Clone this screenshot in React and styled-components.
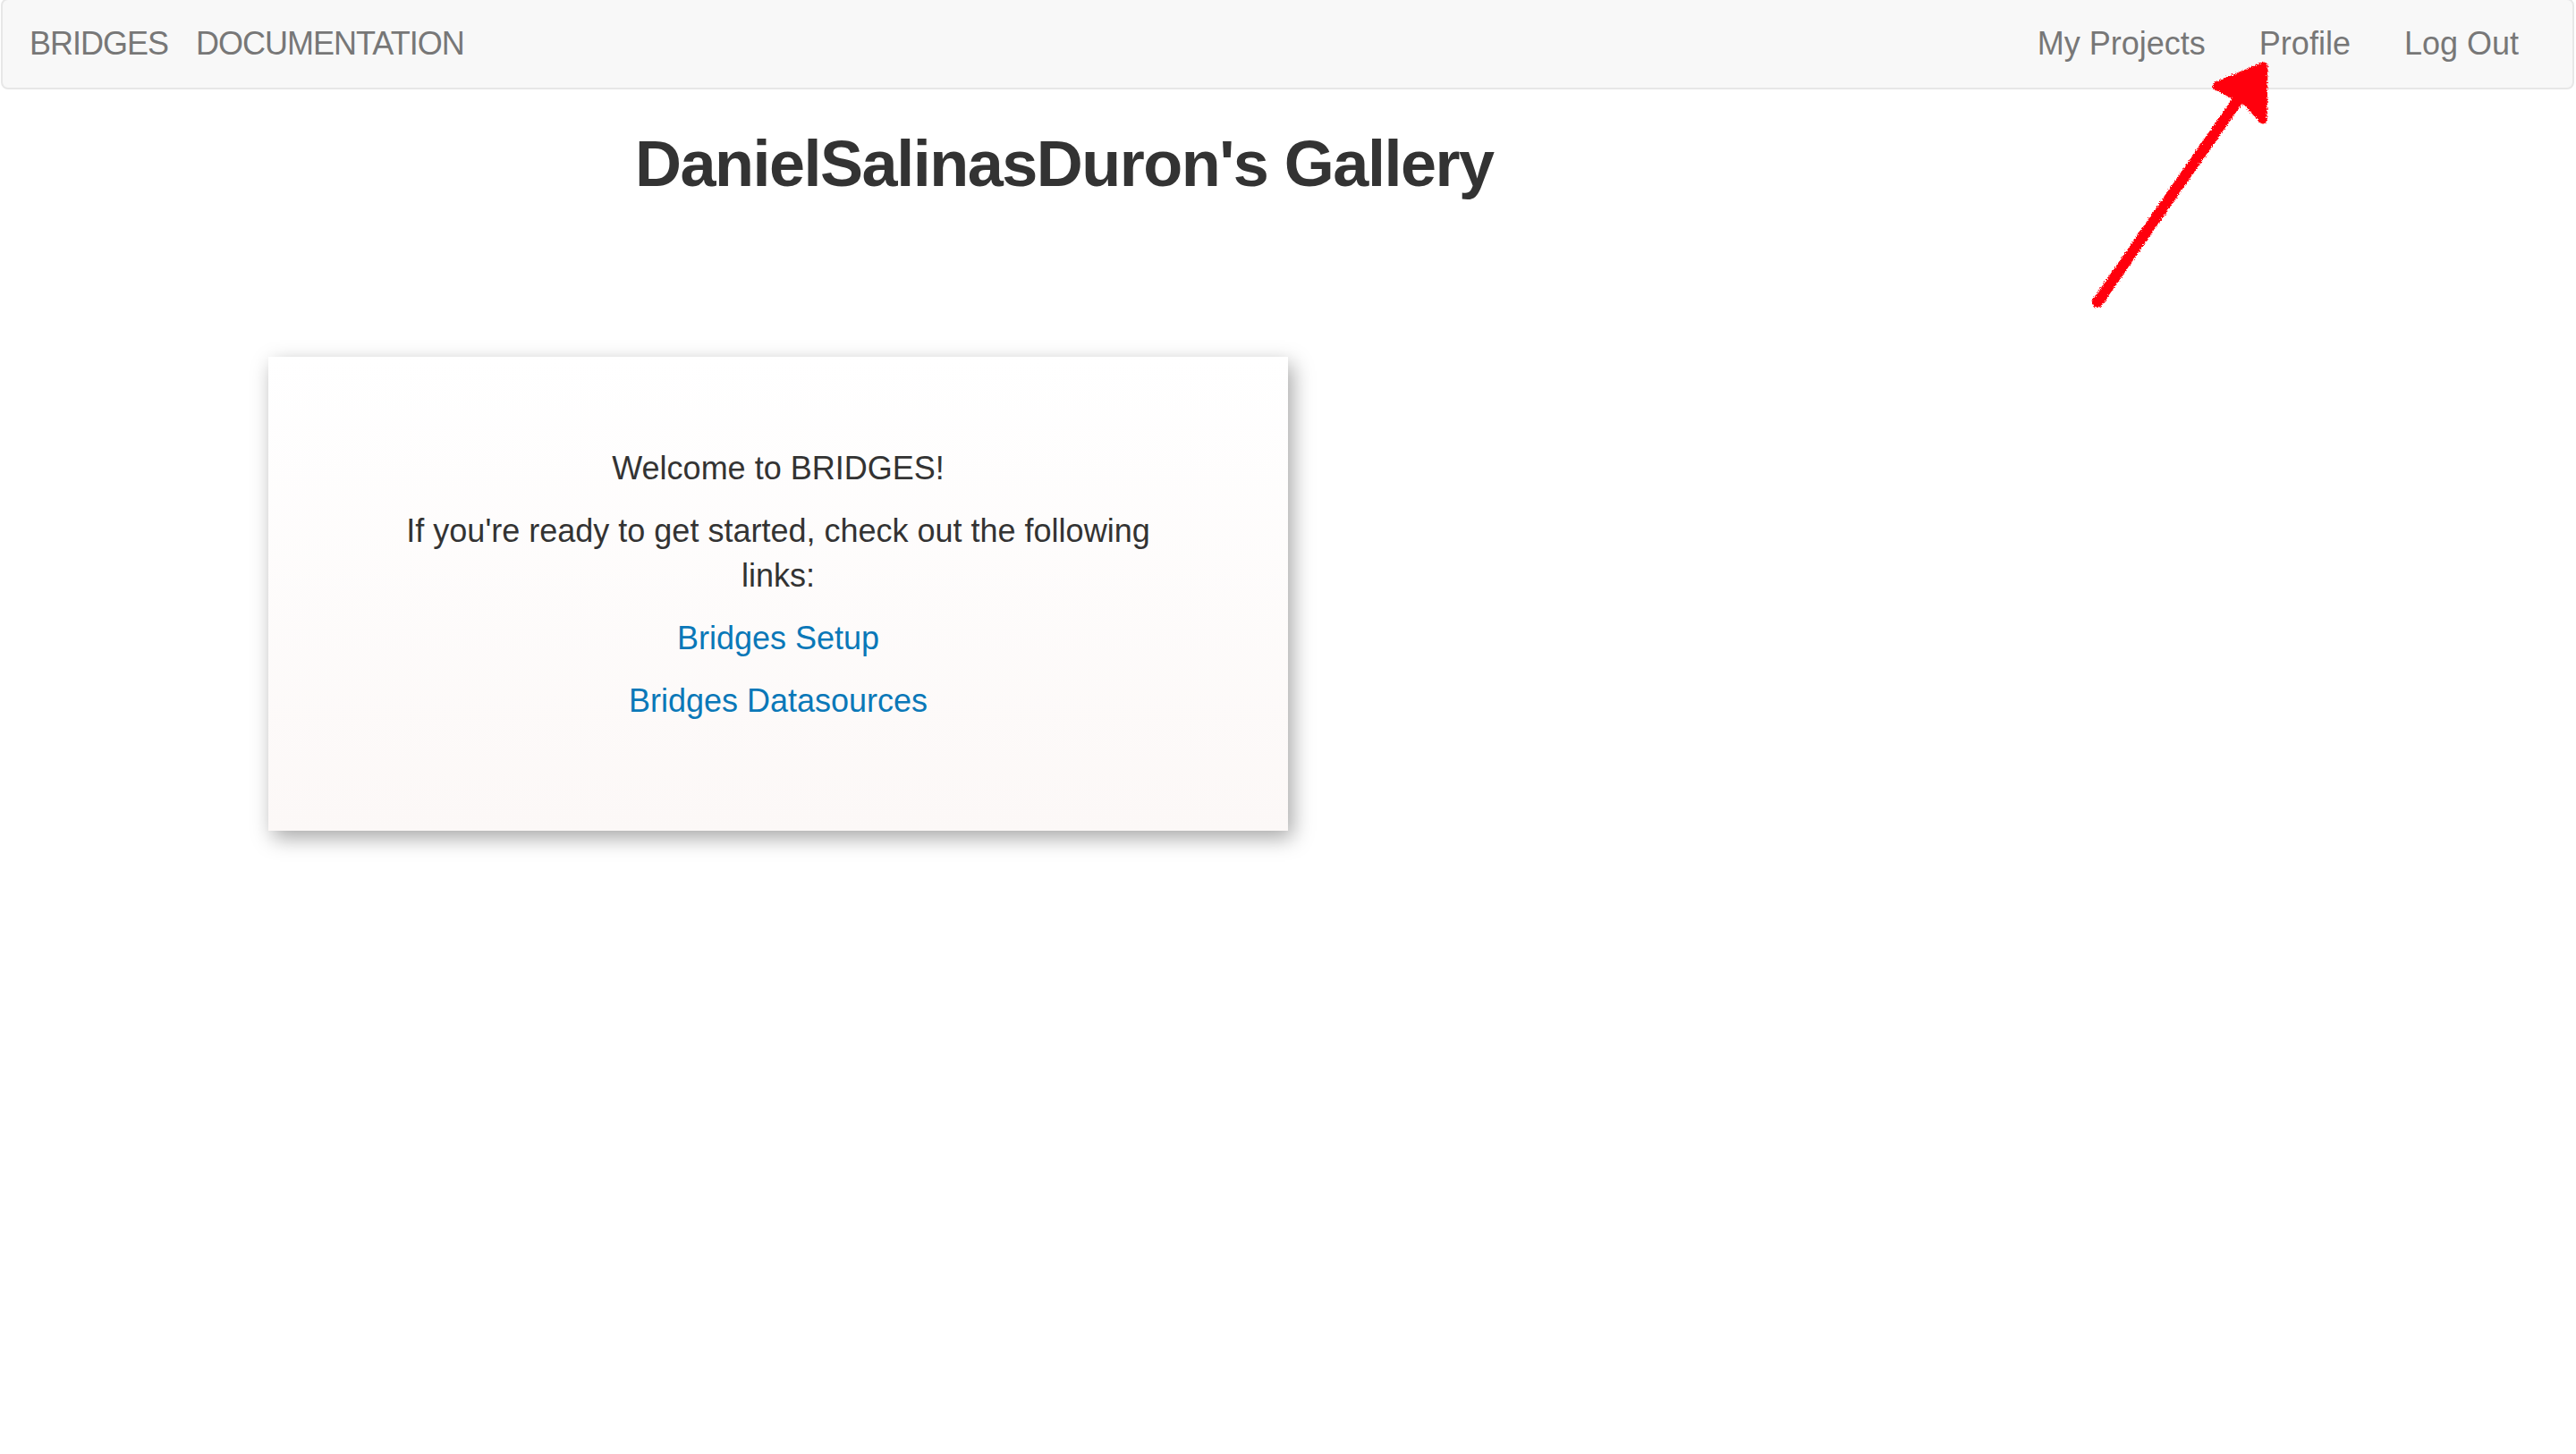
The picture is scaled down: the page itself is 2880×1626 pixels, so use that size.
import React from "react";
import styled, { createGlobalStyle } from "styled-components";

const GlobalStyle = createGlobalStyle`
  html, body {
    margin: 0;
    padding: 0;
    background: #ffffff;
  }
  body {
    font-family: "Liberation Sans", Arial, Helvetica, sans-serif;
    color: #333333;
    min-height: 1626px;
  }
  * { box-sizing: border-box; }
`;

const Page = styled.div`
  position: relative;
  min-height: 1626px;
`;

const Navbar = styled.nav`
  display: flex;
  align-items: center;
  justify-content: space-between;
  height: 102px;
  margin: -2px 2px 0 1px;
  padding: 0 30px;
  background: #f8f8f8;
  border: 2px solid #e7e7e7;
  border-radius: 8px;
`;

const NavGroup = styled.div`
  display: flex;
  align-items: center;
  gap: ${(p) => p.$gap || "0px"};
`;

const NavLink = styled.a`
  font-size: 36px;
  line-height: 36px;
  color: #777777;
  text-decoration: none;
  letter-spacing: ${(p) => (p.$tight ? "-1px" : "0")};
  padding: ${(p) => (p.$padded ? "0 30px" : "0")};
  white-space: nowrap;
`;

const Header = styled.header`
  padding-left: 710px;
  margin-top: 44px;
`;

const Title = styled.h1`
  margin: 0;
  font-size: 72px;
  line-height: 1.1;
  font-weight: 700;
  letter-spacing: -1.5px;
  color: #333333;
`;

const Main = styled.main`
  padding-left: 300px;
  margin-top: 176px;
`;

const Card = styled.section`
  width: 1140px;
  padding: 100px 110px 100px;
  text-align: center;
  background: linear-gradient(180deg, #ffffff 0%, #fcf8f7 100%);
  box-shadow: 5px 8px 22px rgba(0, 0, 0, 0.35);
`;

const Para = styled.p`
  margin: 0 0 20px;
  font-size: 36px;
  line-height: 50px;
  color: #333333;
`;

const TextLink = styled.a`
  color: #0a78b8;
  text-decoration: none;
`;

const ArrowLayer = styled.svg`
  position: absolute;
  left: 2320px;
  top: 50px;
  width: 240px;
  height: 320px;
  overflow: visible;
  pointer-events: none;
`;

function ScribbleArrow() {
  return (
    <ArrowLayer viewBox="0 0 240 320">
      <defs>
        <filter id="rough" x="-20%" y="-20%" width="140%" height="140%">
          <feTurbulence type="fractalNoise" baseFrequency="0.9" numOctaves="2" seed="3" result="noise" />
          <feDisplacementMap in="SourceGraphic" in2="noise" scale="5" xChannelSelector="R" yChannelSelector="G" />
        </filter>
      </defs>
      <g filter="url(#rough)" fill="#ff0010" stroke="#ff0010" strokeLinecap="round" strokeLinejoin="round">
        <path d="M25 290 L 90 196 L 140 124 L 182 64" fill="none" strokeWidth="12" />
        <polygon points="158,48 211,26 210,86 192,66" strokeWidth="9" />
      </g>
    </ArrowLayer>
  );
}

export default function App() {
  return (
    <Page>
      <GlobalStyle />
      <Navbar>
        <NavGroup $gap="31px">
          <NavLink $tight href="#">BRIDGES</NavLink>
          <NavLink $tight href="#">DOCUMENTATION</NavLink>
        </NavGroup>
        <NavGroup>
          <NavLink $padded href="#">My Projects</NavLink>
          <NavLink $padded href="#">Profile</NavLink>
          <NavLink $padded href="#">Log Out</NavLink>
        </NavGroup>
      </Navbar>
      <Header>
        <Title>DanielSalinasDuron's Gallery</Title>
      </Header>
      <Main>
        <Card>
          <Para>Welcome to BRIDGES!</Para>
          <Para>If you're ready to get started, check out the following links:</Para>
          <Para>
            <TextLink href="#">Bridges Setup</TextLink>
          </Para>
          <Para>
            <TextLink href="#">Bridges Datasources</TextLink>
          </Para>
        </Card>
      </Main>
      <ScribbleArrow />
    </Page>
  );
}
